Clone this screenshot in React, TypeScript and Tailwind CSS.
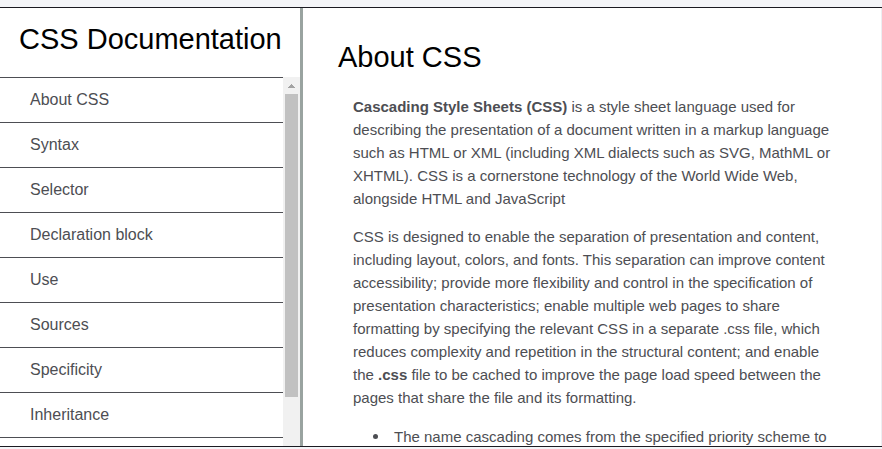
const links = [
  "About CSS",
  "Syntax",
  "Selector",
  "Declaration block",
  "Use",
  "Sources",
  "Specificity",
  "Inheritance",
];

function slug(name: string) {
  return "#" + name.replace(/ /g, "_");
}

function Scrollbar() {
  return (
    <div aria-hidden="true" className="flex w-[17px] shrink-0 flex-col items-center bg-[#f1f1f1]">
      <div className="flex h-[17px] items-center justify-center">
        <svg width="7" height="4" viewBox="0 0 7 4" fill="#a3a3a3">
          <path d="M3 0h1v1h1v1h1v1h1v1H0V3h1V2h1V1h1z" />
        </svg>
      </div>
      <div className="h-[82%] w-[13px] bg-[#c1c1c1]" />
    </div>
  );
}

function Sidebar() {
  return (
    <nav
      aria-label="CSS Documentation"
      className="flex w-[303px] shrink-0 flex-col border-r-3 border-[#99a3a0]"
    >
      <header className="px-[19px] pt-[11px] pb-[17px] text-[29px] leading-[41px] whitespace-nowrap text-black">
        CSS Documentation
      </header>
      <div className="flex min-h-0 flex-1">
        <ul className="min-w-0 flex-1 overflow-hidden">
          {links.map((name) => (
            <li key={name} className="border-t border-[#4d4e53] last:border-b">
              <a href={slug(name)} className="block px-[30px] py-2.5 text-base leading-6 text-[#4d4e53]">
                {name}
              </a>
            </li>
          ))}
        </ul>
        <Scrollbar />
      </div>
    </nav>
  );
}

export default function App() {
  return (
    <div className="flex h-screen flex-col bg-[#f4f5f8] pt-[7px] pb-0.5 font-['Liberation_Sans',Arial,sans-serif]">
      <div className="flex min-h-0 flex-1 border-y border-[#1b1b22] bg-white">
        <Sidebar />
        <main className="min-w-0 flex-1 overflow-hidden border-r border-[#eceef2] pt-7 pr-10 pl-[35px]">
          <section id="About_CSS">
            <h1 className="text-[29px] leading-[42px] text-black">About CSS</h1>
            <div className="pl-[15px] text-[15px] leading-[23px] text-[#4d4e53]">
              <p className="mt-[17px]">
                <strong>Cascading Style Sheets (CSS)</strong> is a style sheet language used for
                describing the presentation of a document written in a markup language such as HTML
                or XML (including XML dialects such as SVG, MathML or XHTML). CSS is a cornerstone
                technology of the World Wide Web, alongside HTML and JavaScript
              </p>
              <p className="mt-[15px]">
                CSS is designed to enable the separation of presentation and content, including
                layout, colors, and fonts. This separation can improve content accessibility;
                provide more flexibility and control in the specification of presentation
                characteristics; enable multiple web pages to share formatting by specifying the
                relevant CSS in a separate .css file, which reduces complexity and repetition in the
                structural content; and enable the <strong>.css</strong> file to be cached to
                improve the page load speed between the pages that share the file and its
                formatting.
              </p>
              <ul className="mt-4 pl-5">
                <li className="flex gap-4 before:mt-[9px] before:size-[5px] before:shrink-0 before:rounded-full before:bg-[#4d4e53]">
                  The name cascading comes from the specified priority scheme to
                </li>
              </ul>
            </div>
          </section>
        </main>
      </div>
    </div>
  );
}
